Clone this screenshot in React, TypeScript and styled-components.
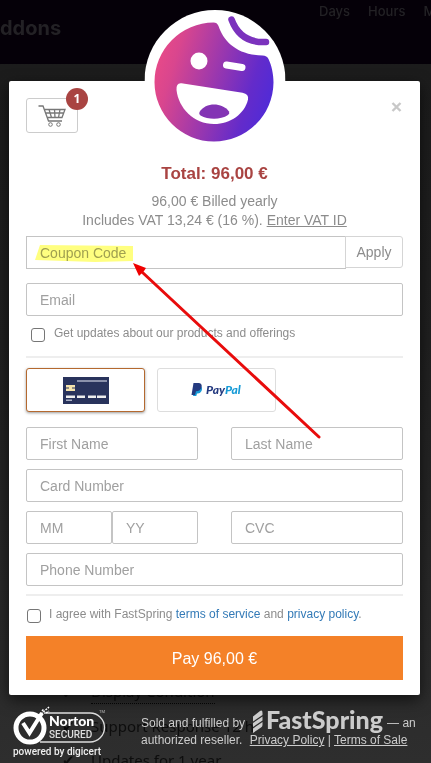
import React from "react";
import styled, { createGlobalStyle, css } from "styled-components";

const GlobalStyle = createGlobalStyle`
  *, *::before, *::after { box-sizing: border-box; }
  body {
    margin: 0;
    background: #1c1c1c;
    font-family: "Liberation Sans", Arial, sans-serif;
    font-size: 14px;
    line-height: 19px;
    color: #8c8c8c;
  }
  button, input { font: inherit; color: inherit; margin: 0; }
`;

const Page = styled.div`
  position: relative;
  min-height: 100vh;
  overflow: hidden;
  background: linear-gradient(#1b1b1b, #202020 45%, #2e2e2e);
`;

const Backdrop = styled.div`
  position: absolute;
  inset: 0;
  display: flex;
  flex-direction: column;
  justify-content: space-between;
  white-space: nowrap;
`;

const SiteHeader = styled.header`
  display: flex;
  justify-content: space-between;
  height: 64px;
  background: #050008;
  color: #232125;
`;

const SiteName = styled.span`
  padding-top: 16px;
  font: 700 20px/24px Inter, sans-serif;
`;

const Countdown = styled.div`
  display: flex;
  gap: 18px;
  width: 112px;
  padding-top: 2px;
  font: 500 13px/19px Inter, sans-serif;
`;

const FeatureList = styled.ul`
  display: flex;
  flex-direction: column;
  gap: 10px;
  height: 84px;
  margin: 0;
  padding: 0 0 0 62px;
  list-style: none;
  color: #0d0d0d;
  font: 15px/24px "Noto Sans", sans-serif;
`;

const Feature = styled.li`
  display: flex;
  gap: 16px;
  align-items: center;
`;

const Dotted = styled.span`
  border-bottom: 1px dotted #050505;
`;

const Checkout = styled.main`
  position: relative;
  margin: 81px 11px 0 9px;
  padding: 17px 17px 15px;
  border-radius: 2px;
  background: #fff;
  box-shadow: 0 5px 15px rgba(0, 0, 0, 0.6);
`;

const Avatar = styled.svg`
  position: absolute;
  top: -71px;
  left: 50%;
  width: 141px;
  height: 141px;
  transform: translateX(-50%);
`;

const TopBar = styled.div`
  display: flex;
  justify-content: space-between;
  align-items: flex-start;
`;

const CartButton = styled.button`
  position: relative;
  display: flex;
  align-items: center;
  justify-content: center;
  width: 52px;
  height: 35px;
  padding: 0;
  border: 1px solid #ccc;
  border-radius: 3px;
  background: #fff;
`;

const Badge = styled.span`
  position: absolute;
  top: -11px;
  right: -11px;
  width: 22px;
  height: 22px;
  border-radius: 50%;
  background: #a94442;
  color: #fff;
  font: 700 12px/21px "Open Sans", sans-serif;
  text-align: center;
`;

const CloseButton = styled.button`
  display: flex;
  padding: 4px 1px;
  border: 0;
  background: none;
`;

const Summary = styled.section`
  margin: 29px 0 6px;
  text-align: center;
`;

const Total = styled.h1`
  margin: 0 0 6px;
  color: #a94442;
  font-size: 17px;
  line-height: 24px;
`;

const Line = styled.p`
  margin: 0;
`;

const VatLink = styled.a`
  color: inherit;
`;

const Field = styled.input`
  flex: 1;
  width: 100%;
  min-width: 0;
  height: 33px;
  padding: 1px 13px 0;
  border: 1px solid #c4c4c4;
  border-radius: 2px;
  background: #fff;
  outline: none;
  &::placeholder { color: #a0a0a0; opacity: 1; }
`;

const CouponField = styled(Field)`
  margin-right: -1px;
  border-radius: 0;
`;

const CouponRow = styled.div`
  position: relative;
  display: flex;
  align-items: flex-start;
  margin-bottom: 14px;
`;

const ApplyButton = styled.button`
  width: 58px;
  height: 32px;
  padding: 0;
  border: 1px solid #d5d5d5;
  border-radius: 0 3px 3px 0;
  background: #fff;
`;

const Marker = styled.svg`
  position: absolute;
  top: 9px;
  left: 9px;
  mix-blend-mode: multiply;
  pointer-events: none;
`;

const Arrow = styled.svg`
  position: absolute;
  top: 26px;
  left: 106px;
  z-index: 1;
  overflow: visible;
  pointer-events: none;
`;

const CheckLine = styled.div<{ $inset?: boolean }>`
  display: flex;
  align-items: center;
  gap: ${(p) => (p.$inset ? 9 : 8)}px;
  height: 40px;
  padding: ${(p) => (p.$inset ? "0 0 2px 5px" : "0 0 0 1px")};
  font-size: 12px;
  line-height: 16px;
  label { margin-bottom: 4px; }
`;

const Tick = styled.input`
  appearance: none;
  flex: none;
  width: 14px;
  height: 14px;
  border: 1px solid #767676;
  border-radius: 3px;
  background: #fff;
`;

const TextLink = styled.a`
  color: #337ab7;
  text-decoration: none;
`;

const Rule = styled.hr`
  height: 2px;
  margin: 0;
  border: 0;
  background: #eee;
`;

const Methods = styled.div`
  display: flex;
  gap: 12px;
  margin: 10px 0 15px;
`;

const Method = styled.button<{ $selected?: boolean }>`
  display: flex;
  align-items: center;
  justify-content: center;
  width: 119px;
  height: 44px;
  padding: 0;
  border: 1px solid #ddd;
  border-radius: 3px;
  background: #fff;
  ${(p) =>
    p.$selected &&
    css`
      border-color: #b4692f;
      box-shadow: 0 1px 3px rgba(0, 0, 0, 0.4);
    `}
`;

const CardForm = styled.div`
  display: grid;
  grid-template-columns: 1fr 1fr;
  gap: 9px 33px;
  margin-bottom: 8px;
`;

const Wide = styled.div`
  display: flex;
  grid-column: 1 / -1;
`;

const Expiry = styled.div`
  display: flex;
`;

const PayButton = styled.button`
  display: block;
  width: 100%;
  height: 44px;
  border: 0;
  background: #f48128;
  color: #fff;
  font-size: 16px;
`;

const Footer = styled.footer`
  position: relative;
  display: flex;
  gap: 34px;
  padding: 11px 0 0 13px;
`;

const Legal = styled.p`
  flex: 1;
  margin: 0;
  padding-top: 9px;
  color: #ccc;
  font-size: 12px;
  line-height: 17px;
  white-space: nowrap;
`;

const SellerLine = styled.span`
  display: flex;
  height: 17px;
  align-items: center;
  gap: 3px;
`;

const Wordmark = styled.svg`
  flex: none;
  margin-left: 4px;
`;

const FooterLink = styled.a`
  color: inherit;
`;

const Policies = styled.span`
  margin-left: 4px;
`;

const FaceLogo = () => (
  <Avatar viewBox="0 0 141 141" role="img" aria-label="Happy Addons">
    <defs>
      <linearGradient id="face" x1="0" y1="0.35" x2="1" y2="0.65">
        <stop offset="0" stopColor="#e84a88" />
        <stop offset="0.15" stopColor="#d9468e" />
        <stop offset="0.8" stopColor="#642bca" />
        <stop offset="1" stopColor="#4f2bd8" />
      </linearGradient>
    </defs>
    <circle cx="70.5" cy="70.5" r="70.5" fill="#fff" />
    <path
      d="M69 12.5C71.500 12.500 73 13.500 74 16C79 31 92 45 118 45.500Q122.500 45.500 124 49C127 55 129 64 129 72.500A59.500 59.500 0 1 1 69 12.500Z"
      fill="url(#face)"
    />
    <path d="M87 9.500C92 23 102 33 121.500 32" fill="none" stroke="#7b32bd" strokeWidth="6.5" strokeLinecap="round" />
    <circle cx="54.5" cy="51" r="8.5" fill="#fff" />
    <path d="M82 55L97.500 57.500" stroke="#fff" strokeWidth="7" strokeLinecap="round" />
    <path
      d="M37 73.200L98 82.700Q104.500 84 103.500 89.500C100 104 86 114 69.500 114C49 114 34 98 32 80Q31.500 72.500 37 73.200Z"
      fill="#fff"
    />
    <path d="M55 102C61 92.500 77 92 84.500 101.500Q85.500 103.500 83.500 105C76 110 64 110 56 105.500Q54 104 55 102Z" fill="#8334b4" />
  </Avatar>
);

const CartIcon = () => (
  <svg width="28" height="22" viewBox="0 0 28 22" fill="none" stroke="#777" aria-hidden="true">
    <path d="M0.500 1H5L10.500 16H24M6 4.500H27L24 12.500H9M7 8H25.500M11 4.500L13.500 12.500M16.500 4.500L17 12.500M22 4.500L20.500 12.500" strokeWidth="1.3" />
    <circle cx="12.5" cy="19.5" r="1.8" />
    <circle cx="20.5" cy="19.5" r="1.8" />
  </svg>
);

const CreditCard = () => (
  <svg width="46" height="27" viewBox="0 0 46 27" aria-hidden="true">
    <path fill="#29335c" d="M0 0H46V27H0Z" />
    <path fill="#8b91ab" d="M14 3H44V5H14Z" />
    <path fill="#f5e3ac" d="M3 8H12V14H3Z" />
    <path d="M3 11H6M9 11H12" stroke="#29335c" fill="none" />
    <path fill="#eee" d="M3 18.500H12V21H3ZM14 18.500H22V21H14ZM25 18.500H33V21H25ZM34 18.500H43V21H34Z" />
    <path fill="#aab0c4" d="M3 22.500H9V24H3Z" />
  </svg>
);

const PayPalLogo = () => (
  <svg width="52" height="16" viewBox="0 0 52 16" role="img" aria-label="PayPal">
    <path fill="#179bd7" d="M4 4H9.500Q12 6 10.500 9T6 11.500L5.300 14H2Z" />
    <path fill="#253b80" d="M2.500 1H8Q11.500 1.800 10.500 5.500T5 9.200L4 13H0.500Z" />
    <text x="15" y="12" fontFamily="Lato, sans-serif" fontSize="12" fontWeight="900" fontStyle="italic" fill="#253b80">
      Pay<tspan fill="#179bd7">Pal</tspan>
    </text>
  </svg>
);

const NortonSeal = () => (
  <svg width="94" height="54" viewBox="0 0 94 54" role="img" aria-label="Norton Secured, powered by digicert">
    <path d="M31 7H77A14.500 14.500 0 0 1 77 36H27" fill="none" stroke="#ddd" strokeWidth="1.3" />
    <circle cx="17" cy="22" r="14" fill="none" stroke="#fff" strokeWidth="5" />
    <path d="M10 17L16.500 27L29 7" fill="none" stroke="#fff" strokeWidth="4" />
    <path d="M28 8L36 1M29 5L31 3M33 7L36 5" stroke="#fff" strokeWidth="1.5" strokeDasharray="2 1" />
    <text x="36" y="20" fill="#fff" fontFamily="Lato, sans-serif" fontWeight="900" fontSize="14">Norton</text>
    <text x="36" y="32" fill="#ddd" fontFamily="Roboto, sans-serif" fontWeight="500" fontSize="10">SECURED</text>
    <text x="86" y="7" fill="#bbb" fontFamily="Roboto, sans-serif" fontSize="4">TM</text>
    <text x="0" y="49" fill="#eee" fontFamily="Roboto, sans-serif" fontWeight="500" fontSize="10">powered by digicert</text>
  </svg>
);

const FastSpringLogo = () => (
  <Wordmark width="132" height="27" viewBox="0 0 132 27" role="img" aria-label="FastSpring">
    <path
      fill="#ccc"
      d="M1 6.500L8 1Q10.500 -0.500 10.500 3V5L1 11.500ZM1 13L10.500 6.500V10.500L1 17ZM1 18.500L10.500 12V15Q10.500 16.500 9 17.500L1 23Z"
    />
    <text x="14" y="19" fill="#ccc" fontFamily="Lato, sans-serif" fontWeight="900" fontSize="25">FastSpring</text>
  </Wordmark>
);

export default function App() {
  return (
    <Page>
      <GlobalStyle />
      <Backdrop aria-hidden="true">
        <SiteHeader>
          <SiteName>ddons</SiteName>
          <Countdown>
            <span>Days</span>
            <span>Hours</span>
            <span>M</span>
          </Countdown>
        </SiteHeader>
        <FeatureList>
          <Feature><span>✔</span><Dotted>Display Condition</Dotted></Feature>
          <Feature><span>✔</span><span>Support Response 12 h</span></Feature>
          <Feature><span>✔</span><span>Updates for 1 year</span></Feature>
        </FeatureList>
      </Backdrop>

      <Checkout>
        <FaceLogo />
        <TopBar>
          <CartButton type="button" aria-label="Cart, 1 item">
            <CartIcon />
            <Badge>1</Badge>
          </CartButton>
          <CloseButton type="button" aria-label="Close">
            <svg width="11" height="10" viewBox="0 0 11 10" aria-hidden="true">
              <path d="M1.500 1L9.500 9M9.500 1L1.500 9" stroke="#c8c8c8" strokeWidth="2.4" />
            </svg>
          </CloseButton>
        </TopBar>

        <Summary>
          <Total>Total: 96,00 €</Total>
          <Line>96,00 € Billed yearly</Line>
          <Line>Includes VAT 13,24 € (16 %). <VatLink href="#vat">Enter VAT ID</VatLink></Line>
        </Summary>

        <CouponRow>
          <CouponField aria-label="Coupon Code" placeholder="Coupon Code" />
          <ApplyButton type="button">Apply</ApplyButton>
          <Marker width="98" height="18" viewBox="0 0 98 18" aria-hidden="true">
            <path d="M5 0L98 1V16L60 17L0 15Z" fill="#ffff80" />
          </Marker>
          <Arrow width="190" height="176" viewBox="0 0 190 176" aria-hidden="true">
            <path d="M10 10L187 175" stroke="#e80c0c" strokeWidth="3" strokeLinecap="round" />
            <path d="M1 1L14 6L12 9L9 12L7 14Z" fill="#f00000" />
          </Arrow>
        </CouponRow>
        <Field type="email" aria-label="Email" placeholder="Email" />
        <CheckLine $inset>
          <Tick type="checkbox" id="updates" />
          <label htmlFor="updates">Get updates about our products and offerings</label>
        </CheckLine>
        <Rule />

        <Methods>
          <Method type="button" $selected aria-label="Credit card"><CreditCard /></Method>
          <Method type="button" aria-label="PayPal"><PayPalLogo /></Method>
        </Methods>

        <CardForm>
          <Field aria-label="First Name" placeholder="First Name" />
          <Field aria-label="Last Name" placeholder="Last Name" />
          <Wide><Field aria-label="Card Number" placeholder="Card Number" /></Wide>
          <Expiry>
            <Field aria-label="Expiry month" placeholder="MM" />
            <Field aria-label="Expiry year" placeholder="YY" />
          </Expiry>
          <Field aria-label="CVC" placeholder="CVC" />
          <Wide><Field type="tel" aria-label="Phone Number" placeholder="Phone Number" /></Wide>
        </CardForm>
        <Rule />

        <CheckLine>
          <Tick type="checkbox" id="agree" />
          <label htmlFor="agree">
            I agree with FastSpring <TextLink href="#terms">terms of service</TextLink> and{" "}
            <TextLink href="#privacy">privacy policy</TextLink>.
          </label>
        </CheckLine>
        <PayButton type="button">Pay 96,00 €</PayButton>
      </Checkout>

      <Footer>
        <NortonSeal />
        <Legal>
          <SellerLine>Sold and fulfilled by <FastSpringLogo /> — an</SellerLine>
          authorized reseller.{" "}
          <Policies>
            <FooterLink href="#privacy-policy">Privacy Policy</FooterLink> |{" "}
            <FooterLink href="#terms-of-sale">Terms of Sale</FooterLink>
          </Policies>
        </Legal>
      </Footer>
    </Page>
  );
}
